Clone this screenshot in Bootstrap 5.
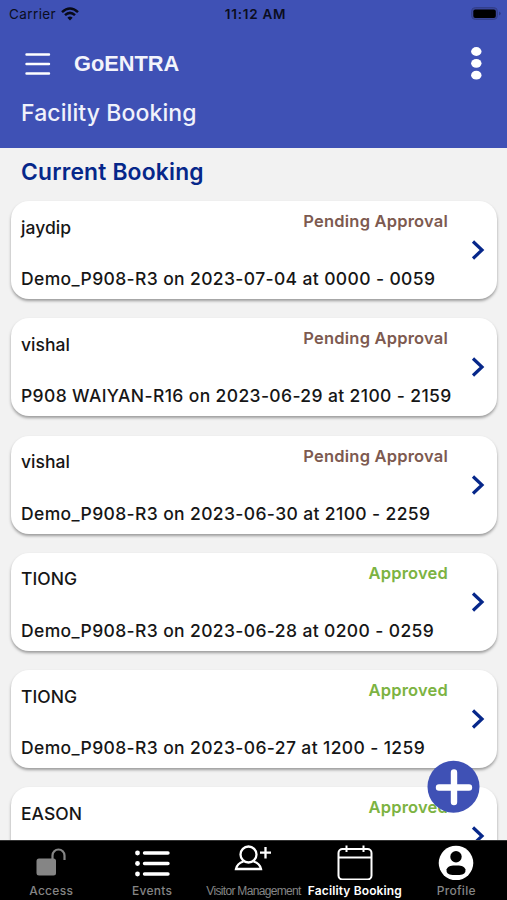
<!DOCTYPE html>
<html lang="en">
<head>
<meta charset="utf-8">
<meta name="viewport" content="width=device-width, initial-scale=1">
<title>GoENTRA – Facility Booking</title>
<link rel="stylesheet" href="https://cdn.jsdelivr.net/npm/bootstrap@5.3.0/dist/css/bootstrap.min.css">
<style>
body{font-family:Inter,"Liberation Sans",sans-serif;background:#f2f2f2;height:900px;overflow:hidden}
svg{display:block;flex:none}
.app-head{background:#3f51b5;height:147.5px}
.status-bar{height:28px;font-size:13.5px;line-height:28px;color:#0b0d20}
.status-bar>div{flex:1 1 0}
.carrier{letter-spacing:.4px;padding-left:1px}
.clock{font-weight:600;letter-spacing:.85px;letter-spacing:.75px}
.title-row{height:70px;padding:0 24px}
.brand-name{font:700 21.8px/71px "Liberation Sans",Arial,sans-serif;color:#f3f4fb;margin-left:23px}
.page-name{font-size:23px;line-height:31px;font-weight:500;color:#f0f2fb;padding-left:21px;letter-spacing:.1px}
.section-name{font-size:22.8px;line-height:30px;font-weight:600;color:#06278a;padding:9px 0 0 21px;margin-bottom:14.7px;letter-spacing:.2px}
.booking-list{height:692.5px}
.booking{height:98px;margin:0 10px 19.25px 11px;border:0;border-radius:18px;box-shadow:0 2px 3px rgba(0,0,0,.36);padding:10px 10px 0 10px;background:#fff;position:relative}
.who{font-size:17.5px;line-height:22px;font-weight:500;color:#161616;margin-top:5.5px;letter-spacing:.05px}
.state{font-size:16.5px;line-height:20px;font-weight:600;margin-right:39px;letter-spacing:.2px}
.pending{color:#7d5a50}
.approved{color:#7cb342}
.slot{font-size:17.5px;line-height:22px;font-weight:500;color:#161616;margin-top:29.5px;white-space:nowrap;letter-spacing:.37px}
.chev{position:absolute;right:12.5px;top:39px}
.fab{position:absolute;left:427px;top:760px;z-index:2}
.tabs{height:60px;background:#000;z-index:3;color:#858585;font-size:12px;line-height:16px;font-weight:500;letter-spacing:.3px;border-top:1px solid #333}
.tabs>a{width:20%;color:inherit;text-decoration:none;white-space:nowrap}
.tabs>a:first-child{padding-left:1px}
.tabs .pic{height:42px;padding-top:3px}
.tabs .tight{font-family:"Liberation Sans",sans-serif;font-weight:400;letter-spacing:-.68px}
.tabs .on{color:#fff;font-weight:600;letter-spacing:.13px}
</style>
<script src="https://cdn.jsdelivr.net/npm/bootstrap@5.3.0/dist/js/bootstrap.bundle.min.js"></script>
</head>
<body>
<header class="app-head">
  <div class="status-bar d-flex">
    <div class="d-flex align-items-center ps-2"><span class="carrier">Carrier</span>
      <svg class="ms-1" width="20" height="14" viewBox="-1 0 20 14" fill="none" stroke="#080a18" stroke-width="2.5"><path d="M1 5.2Q9-2.2 17 5.2M4 8.2Q9 3.6 14 8.2"/><path d="M6.4 10.7Q9 8.4 11.6 10.7L9 13.5z" fill="#080a18" stroke="none"/></svg>
    </div>
    <div class="clock text-center">11:12 AM</div>
    <div class="d-flex justify-content-end align-items-center pe-1">
      <svg width="34" height="16" viewBox="0 0 32 16"><rect x="1.5" y="1.5" width="26" height="12" rx="4" fill="#3a469a" stroke="#323f8c"/><rect x="3.3" y="3.5" width="22.5" height="8.5" rx="2" fill="#000"/><path d="M29.2 5.5q3 2 0 4z" fill="#2c377c"/></svg>
    </div>
  </div>
  <div class="title-row d-flex align-items-center">
    <svg width="27" height="24" viewBox="0 0 27 24" stroke="#fff" stroke-width="2.4" stroke-linecap="round"><path d="M2.5 3.500h22.500M2.500 13h22.500M2.500 22.500h22.500"/></svg>
    <div class="brand-name">GoENTRA</div>
    <svg class="ms-auto" width="13" height="34" viewBox="0 0 13 34" fill="#fff"><ellipse cx="6.300" cy="5.500" rx="5.200" ry="4.400"/><ellipse cx="6.300" cy="17.300" rx="5.200" ry="4.400"/><ellipse cx="6.300" cy="29.200" rx="5.200" ry="4.400"/></svg>
  </div>
  <h1 class="page-name m-0">Facility Booking</h1>
</header>
<main class="booking-list overflow-hidden">
  <h2 class="section-name mt-0">Current Booking</h2>
  <div class="card booking"><div class="d-flex justify-content-between"><div class="who">jaydip</div><div class="state pending">Pending Approval</div></div><div class="slot">Demo_P908-R3 on 2023-07-04 at 0000 - 0059</div><svg class="chev" width="14" height="20" viewBox="0 0 14 20" fill="none" stroke="#06278a" stroke-width="3.200"><path d="M2 1.500L11 10L2 18.500"/></svg></div>
  <div class="card booking"><div class="d-flex justify-content-between"><div class="who">vishal</div><div class="state pending">Pending Approval</div></div><div class="slot">P908 WAIYAN-R16 on 2023-06-29 at 2100 - 2159</div><svg class="chev" width="14" height="20" viewBox="0 0 14 20" fill="none" stroke="#06278a" stroke-width="3.200"><path d="M2 1.500L11 10L2 18.500"/></svg></div>
  <div class="card booking"><div class="d-flex justify-content-between"><div class="who">vishal</div><div class="state pending">Pending Approval</div></div><div class="slot">Demo_P908-R3 on 2023-06-30 at 2100 - 2259</div><svg class="chev" width="14" height="20" viewBox="0 0 14 20" fill="none" stroke="#06278a" stroke-width="3.200"><path d="M2 1.500L11 10L2 18.500"/></svg></div>
  <div class="card booking"><div class="d-flex justify-content-between"><div class="who">TIONG</div><div class="state approved">Approved</div></div><div class="slot">Demo_P908-R3 on 2023-06-28 at 0200 - 0259</div><svg class="chev" width="14" height="20" viewBox="0 0 14 20" fill="none" stroke="#06278a" stroke-width="3.200"><path d="M2 1.500L11 10L2 18.500"/></svg></div>
  <div class="card booking"><div class="d-flex justify-content-between"><div class="who">TIONG</div><div class="state approved">Approved</div></div><div class="slot">Demo_P908-R3 on 2023-06-27 at 1200 - 1259</div><svg class="chev" width="14" height="20" viewBox="0 0 14 20" fill="none" stroke="#06278a" stroke-width="3.200"><path d="M2 1.500L11 10L2 18.500"/></svg></div>
  <div class="card booking"><div class="d-flex justify-content-between"><div class="who">EASON</div><div class="state approved">Approved</div></div><svg class="chev" width="14" height="20" viewBox="0 0 14 20" fill="none" stroke="#06278a" stroke-width="3.200"><path d="M2 1.500L11 10L2 18.500"/></svg></div>
</main>
<svg class="fab" width="53" height="53" viewBox="0 0 53 53"><circle cx="26.500" cy="26.700" r="26" fill="#3f51b5"/><path d="M27 12.500v29.500M12 27.500h30" stroke="#fff" stroke-width="6.400" stroke-linecap="round"/></svg>
<nav class="tabs fixed-bottom d-flex text-center">
  <a href="#"><div class="pic d-flex justify-content-center"><svg width="32" height="34" viewBox="0 0 32 34"><rect x="1.500" y="14.500" width="19.500" height="17" rx="2.500" fill="#858585"/><path d="M17.500 15V11.500a6 6 0 0 1 12 0V16" fill="none" stroke="#858585" stroke-width="2.200"/></svg></div>Access</a>
  <a href="#"><div class="pic d-flex justify-content-center"><svg width="36" height="34" viewBox="0 0 36 34" stroke="#fff" stroke-width="3.400" stroke-linecap="round"><path d="M10.500 9H34M10.500 19.500H34M10.500 30H34"/><g fill="#fff" stroke="none"><circle cx="3.500" cy="9" r="2.400"/><circle cx="3.500" cy="19.500" r="2.400"/><circle cx="3.500" cy="30" r="2.400"/></g></svg></div>Events</a>
  <a href="#" class="tight"><div class="pic d-flex justify-content-center"><svg width="38" height="34" viewBox="0 0 38 34" fill="none" stroke="#fff" stroke-width="2.300"><circle cx="14.500" cy="10.500" r="8"/><path d="M9.500 17.500Q3 19.500 2 25H27Q26 19.500 19.500 17.500M31.500 3V14.500M26 8.700H37"/></svg></div>Visitor Management</a>
  <a href="#" class="on"><div class="pic d-flex justify-content-center"><svg width="36" height="36" viewBox="0 0 36 36" fill="none" stroke="#fff" stroke-width="2"><rect x="1.500" y="5" width="33" height="30.500" rx="4"/><path d="M1.500 13.500H34.500M9.500 1.500V8M26.500 1.500V8" /></svg></div>Facility Booking</a>
  <a href="#"><div class="pic d-flex justify-content-center"><svg width="36" height="36" viewBox="0 0 36 36"><circle cx="18" cy="19" r="17.300" fill="#fff"/><circle cx="18" cy="12.800" r="5.700"/><path d="M8.500 25.500C10 21.500 14 21.500 18 21.500S26 21.500 27.500 25.500Q28 30.500 21.500 31H14.500Q8 30.500 8.500 25.500"/></svg></div>Profile</a>
</nav>
</body>
</html>
